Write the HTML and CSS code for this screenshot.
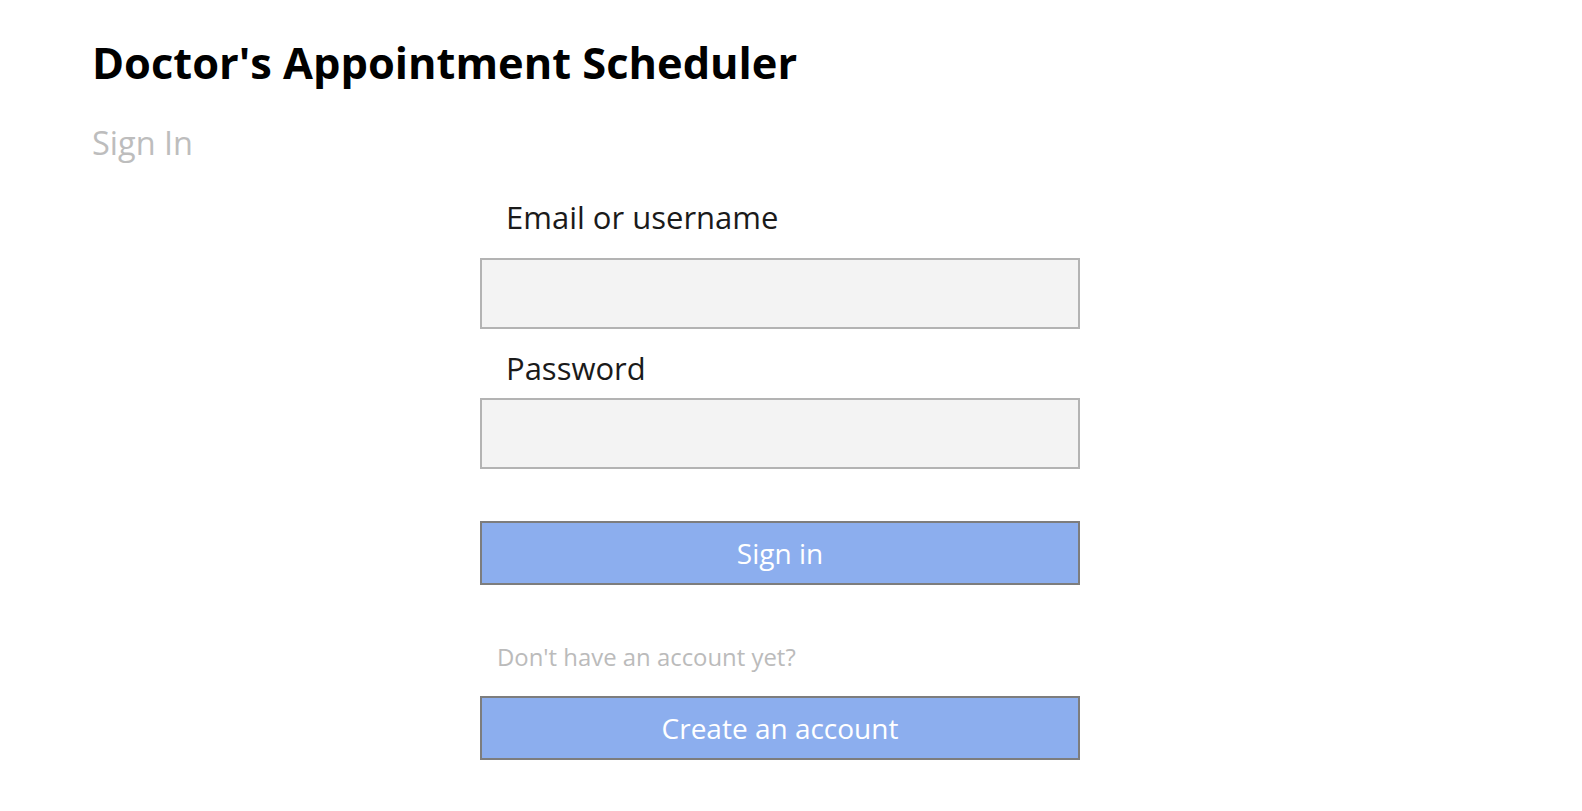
FILE: index.html
```html
<!DOCTYPE html>
<html lang="en">
<head>
<meta charset="utf-8">
<title>Doctor's Appointment Scheduler</title>
<link rel="stylesheet" href="styles.css">
</head>
<body>
<div class="page">
  <h1 class="title">Doctor's Appointment Scheduler</h1>
  <h2 class="subtitle">Sign In</h2>
  <form class="form">
    <label class="label label-email" for="email">Email or username</label>
    <input class="field" id="email" type="text">
    <label class="label label-password" for="password">Password</label>
    <input class="field" id="password" type="password">
    <button class="btn btn-signin" type="button">Sign in</button>
    <p class="hint">Don't have an account yet?</p>
    <button class="btn" type="button">Create an account</button>
  </form>
</div>
</body>
</html>
```

FILE: styles.css
```css
* {
  box-sizing: border-box;
}

html, body {
  margin: 0;
  padding: 0;
  background: #ffffff;
}

body {
  font-family: "Open Sans", "Noto Sans", sans-serif;
  color: #1a1a1a;
}

.page {
  padding: 35px 0 0 92px;
}

.title {
  margin: 0;
  font-size: 43.4px;
  line-height: 56px;
  font-weight: 700;
  color: #000;
}

.subtitle {
  margin: 31.5px 0 0 0;
  font-size: 32.5px;
  line-height: 40px;
  font-weight: 400;
  color: #bdbdbd;
}

.form {
  margin: 34.5px 0 0 388px;
  width: 600px;
  display: flex;
  flex-direction: column;
}

.label {
  display: block;
  padding-left: 26px;
  font-size: 31px;
  line-height: 40px;
  color: #1a1a1a;
}

.label-email {
  margin-bottom: 21px;
}

.label-password {
  margin-top: 19px;
  margin-bottom: 10px;
}

.field {
  display: block;
  width: 600px;
  height: 71px;
  margin: 0;
  padding: 0 16px;
  border: 2px solid #b3b3b3;
  border-radius: 0;
  background: #f3f3f3;
  font-family: inherit;
  font-size: 28px;
  outline: none;
}

.btn {
  display: block;
  width: 600px;
  height: 64px;
  margin: 0;
  padding: 0;
  border: 2px solid #7d7d7d;
  border-radius: 0;
  background: #8caeee;
  color: #ffffff;
  font-family: inherit;
  font-size: 28px;
  line-height: 58px;
  text-align: center;
  cursor: pointer;
}

.btn-signin {
  margin-top: 52px;
}

.hint {
  margin: 56px 0 23px 0;
  padding-left: 17px;
  font-size: 23.9px;
  line-height: 32px;
  color: #bbbbbb;
}
```
